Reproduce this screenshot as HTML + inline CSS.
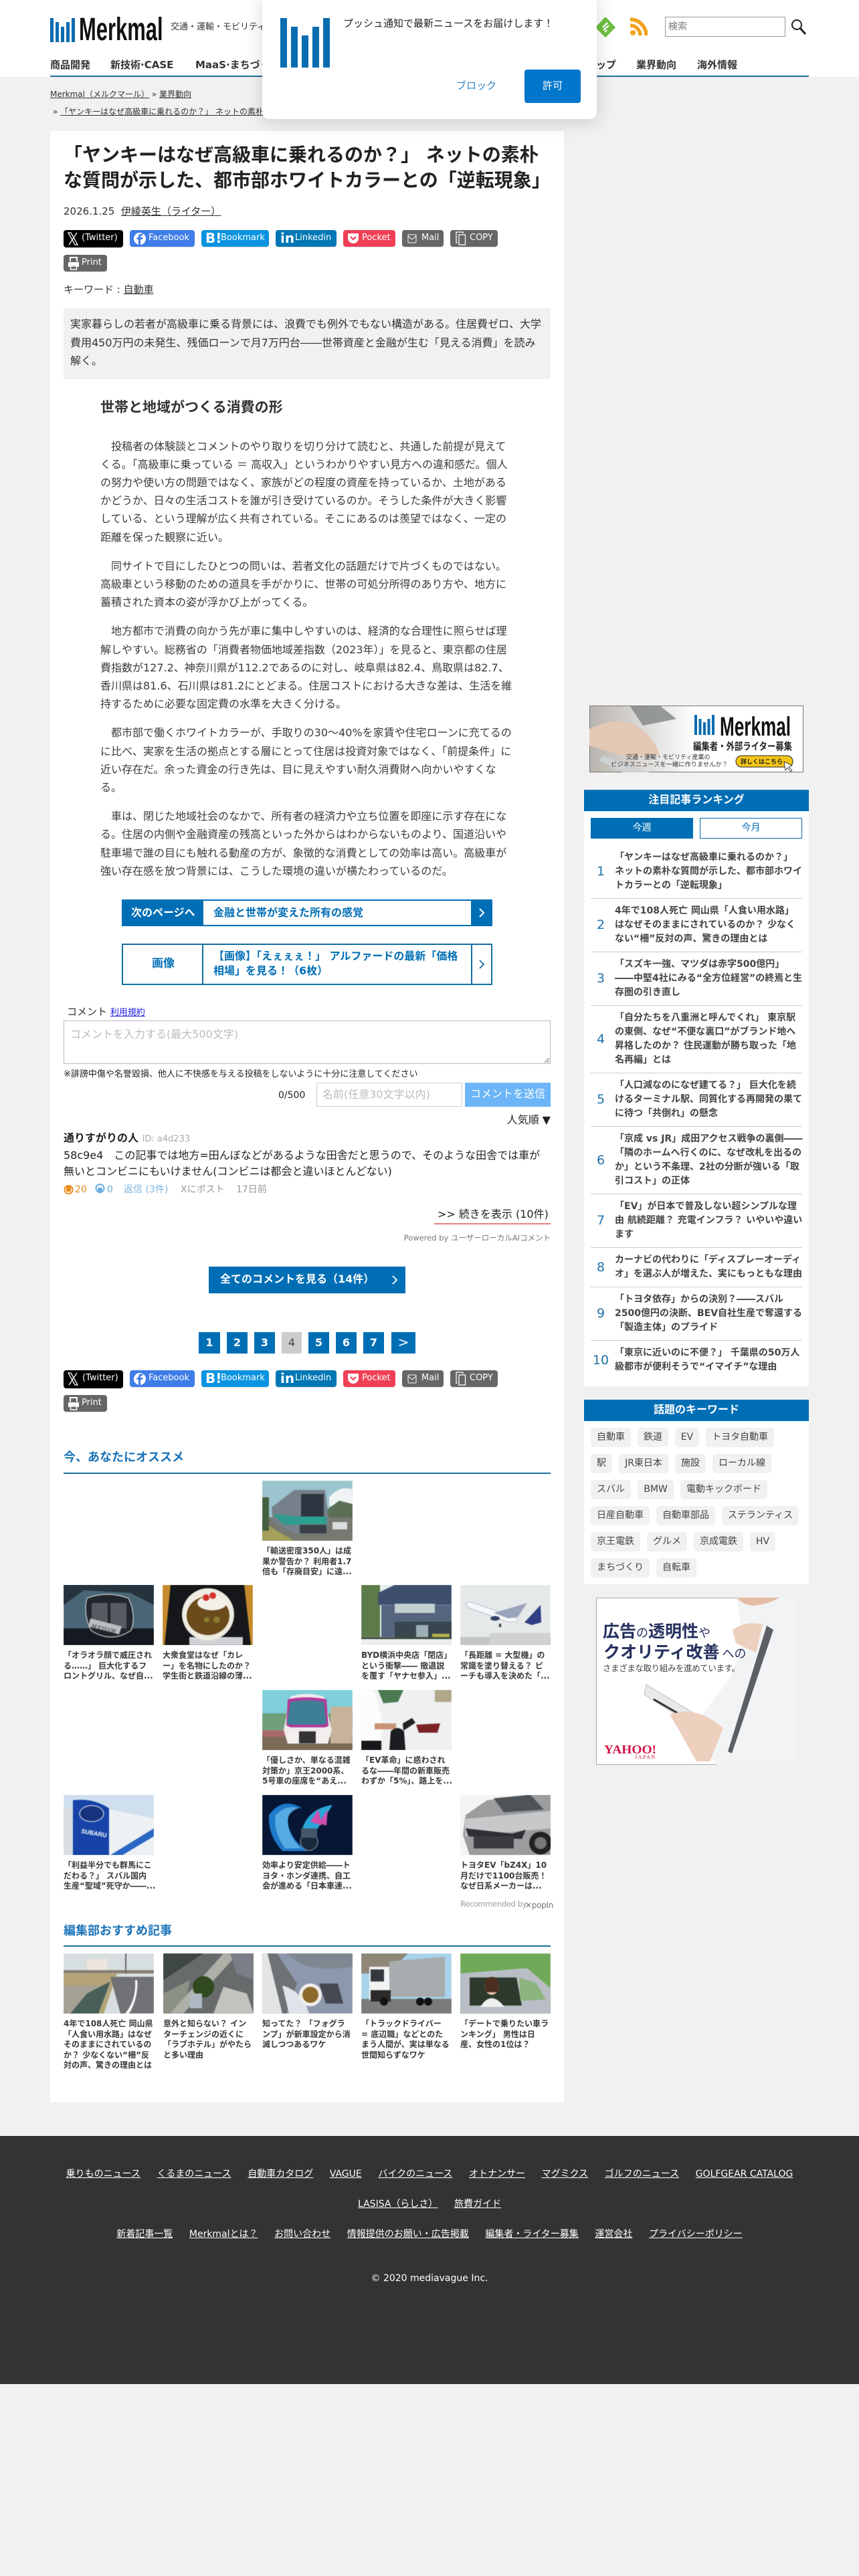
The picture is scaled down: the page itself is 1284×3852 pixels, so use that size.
<!DOCTYPE html>
<html lang="ja"><head><meta charset="utf-8"><title>Merkmal</title>
<style>
*{box-sizing:border-box;margin:0;padding:0}
html,body{width:1284px;height:3852px;overflow:hidden;background:#f1f1f1}
body{position:relative;font-family:"DejaVu Sans","Noto Sans CJK JP",sans-serif;color:#333;font-size:16px}
.a{position:absolute;white-space:nowrap}
a,u{color:inherit}
.bar{position:absolute;background:#0a6cb0}
.btn{position:absolute;height:25px;border-radius:4px;color:#fff;font-size:13px;line-height:24px;white-space:nowrap;box-shadow:0 1px 1px rgba(0,0,0,.12)}
.btn svg{position:absolute;left:5px;top:3px}
.btn span{position:absolute;top:0}
.thumb{position:absolute;width:135px;height:90px;overflow:hidden;display:block}
.thumb>*{filter:blur(.4px)}
.ct{position:absolute;width:135px;font-size:12px;line-height:15.7px;font-weight:700;color:#3a3a3a;white-space:nowrap}
.pg{position:absolute;top:1992px;height:32px;background:#006eb5;color:#fff;font-weight:700;font-size:16px;line-height:31px;text-align:center}
.ri{position:absolute;left:883px;width:316px;display:flex;align-items:center}
.ri b{width:30px;text-align:center;font-weight:400;font-size:19px;color:#2272a8;flex:none}
.ri div{margin-left:6px;font-size:14px;line-height:21px;white-space:nowrap;font-weight:700;color:#444}
.sep{position:absolute;left:883px;width:316px;height:1px;background:#ccc}
.chip{position:absolute;height:29px;background:#f1f1f1;border-radius:5px;font-size:14px;line-height:28px;text-align:center;color:#444;white-space:nowrap}
p{margin:0 0 16px}
#foot{position:absolute;left:0;top:3194px;width:1284px;height:371px;background:#333;color:#fff;font-size:14px}
#foot div{position:absolute;left:0;width:1284px;text-align:center;white-space:nowrap;line-height:20px}
#foot u{margin:0 12.3px}
</style></head><body>

<!-- header -->
<div class="a" style="left:0;top:0;width:1284px;height:115px;background:#fff"></div>
<div class="a" style="left:75px;top:113px;width:1134px;height:2px;background:#1a6f9c"></div>
<div class="bar" style="left:75px;top:27px;width:5px;height:36px"></div>
<div class="bar" style="left:83px;top:33px;width:5px;height:30px"></div>
<div class="bar" style="left:91px;top:40px;width:5px;height:23px"></div>
<div class="bar" style="left:99px;top:33px;width:5px;height:30px"></div>
<div class="bar" style="left:107px;top:27px;width:5px;height:36px"></div>
<div class="a" style="left:118px;top:17px;font:700 48px/56px 'Liberation Sans',sans-serif;color:#111;transform:scaleX(.645);transform-origin:0 0">Merkmal</div>
<div class="a" style="left:255px;top:31px;font-size:13px;line-height:20px">交通・運輸・モビリティ産業の最新ビジネスニュース</div>
<svg class="a" style="left:890px;top:26px" width="30" height="30" viewBox="0 0 30 30"><path d="M15 1 28 15 15 28 2 15Z" fill="#6cbf3f" stroke="#6cbf3f" stroke-width="3" stroke-linejoin="round"/><path d="M11 15 18 8M12 19 20 12M14 22l3-3" stroke="#fff" stroke-width="2.4"/></svg>
<svg class="a" style="left:940px;top:26px" width="28" height="28" viewBox="0 0 28 28"><circle cx="6" cy="23" r="4" fill="#f0a21f"/><path d="M2 12A15 15 0 0 1 17 27M2 3A24 24 0 0 1 26 27" fill="none" stroke="#f0a21f" stroke-width="5.5"/></svg>
<div class="a" style="left:994px;top:25px;width:180px;height:30px;border:1px solid #999;background:#fff;font-size:14px;line-height:28px;padding-left:4px;color:#777">検索</div>
<svg class="a" style="left:1182px;top:28px" width="24" height="24" viewBox="0 0 24 24"><circle cx="9" cy="9" r="7" fill="none" stroke="#222" stroke-width="2"/><path d="M14 14 22 23" stroke="#222" stroke-width="3"/></svg>
<div class="a" style="left:75px;top:87px;font-size:15px;line-height:20px;font-weight:700">商品開発</div>
<div class="a" style="left:165px;top:87px;font-size:15px;line-height:20px;font-weight:700">新技術·CASE</div>
<div class="a" style="left:292px;top:87px;font-size:15px;line-height:20px;font-weight:700">MaaS·まちづくり</div>
<div class="a" style="left:816px;top:87px;font-size:15px;line-height:20px;font-weight:700">スタートアップ</div>
<div class="a" style="left:951px;top:87px;font-size:15px;line-height:20px;font-weight:700">業界動向</div>
<div class="a" style="left:1042px;top:87px;font-size:15px;line-height:20px;font-weight:700">海外情報</div>
<div class="a" style="left:75px;top:133px;font-size:12px;line-height:17px"><u>Merkmal（メルクマール）</u> » <u>業界動向</u></div>
<div class="a" style="left:79px;top:159px;font-size:12px;line-height:17px">» <u>「ヤンキーはなぜ高級車に乗れるのか？」 ネットの素朴な質問が示した</u></div>

<!-- article card -->
<div class="a" style="left:75px;top:196px;width:768px;height:2948px;background:#fff"></div>
<div class="a" style="left:95px;top:213px;font-size:28px;line-height:38px;font-weight:700;color:#222">「ヤンキーはなぜ高級車に乗れるのか？」 ネットの素朴<br>な質問が示した、都市部ホワイトカラーとの「逆転現象」</div>
<div class="a" style="left:95px;top:305px;font-size:15px;line-height:22px">2026.1.25 &nbsp;<u>伊綾英生（ライター）</u></div>

<!-- share 1 -->
<div class="btn" style="left:95px;top:344px;width:89px;height:26px;background:#000"><svg width="18" height="20" viewBox="0 0 18 20"><path d="M2 1h4l10 18h-4ZM15 1 3 19" fill="none" stroke="#fff" stroke-width="1.3"/></svg><span style="left:27px">(Twitter)</span></div>
<div class="btn" style="left:194px;top:344px;width:97px;background:#3f7de8"><svg width="20" height="20" viewBox="0 0 20 20"><circle cx="10" cy="10" r="9" fill="#fff"/><path d="M11 19v-8h3l.4-3H11V6.500c0-1 .5-1.500 1.500-1.500H14.500V2.500h-2.500C9.500 2.500 8 4 8 6.500V8H5.500v3H8v8Z" fill="#3f7de8"/></svg><span style="left:28px">Facebook</span></div>
<div class="btn" style="left:301px;top:344px;width:101px;background:#0a93e0"><span style="left:6px;font-size:20px;font-weight:700">B!</span><span style="left:29px">Bookmark</span></div>
<div class="btn" style="left:412px;top:344px;width:91px;background:#0077b5"><span style="left:7px;font-size:20px;font-weight:700">in</span><span style="left:29px">Linkedin</span></div>
<div class="btn" style="left:513px;top:344px;width:78px;background:#ef4056"><svg style="left:6px" width="18" height="18" viewBox="0 0 18 18"><path d="M1 2h16v7a8 8 0 0 1-16 0Z" fill="#fff"/><path d="M5 7l4 4 4-4" fill="none" stroke="#ef4056" stroke-width="2.200"/></svg><span style="left:28px">Pocket</span></div>
<div class="btn" style="left:601px;top:344px;width:62px;background:#666"><svg style="left:8px;top:6px" width="14" height="14" viewBox="0 0 14 14"><rect x="1" y="1" width="12" height="12" rx="1" fill="none" stroke="#fff"/><path d="M1 3l6 5 6-5" fill="none" stroke="#fff"/></svg><span style="left:29px">Mail</span></div>
<div class="btn" style="left:673px;top:344px;width:71px;background:#666"><svg style="left:8px;top:2px" width="16" height="21" viewBox="0 0 16 21"><path d="M3 17H1V1h10v2" fill="none" stroke="#fff" stroke-width="1.300"/><rect x="5" y="5" width="9.500" height="15" fill="none" stroke="#fff" stroke-width="1.300"/></svg><span style="left:29px">COPY</span></div>
<div class="btn" style="left:95px;top:381px;width:65px;background:#666"><svg style="left:6px;top:3px" width="18" height="20" viewBox="0 0 18 20"><path d="M4 7V1h10v6" fill="none" stroke="#fff" stroke-width="2"/><path d="M1 8h16v7H14v-2H4v2H1Z" fill="#fff"/><rect x="4.500" y="14" width="9" height="5" fill="none" stroke="#fff" stroke-width="1.500"/></svg><span style="left:27px">Print</span></div>

<div class="a" style="left:95px;top:422px;font-size:15px;line-height:22px">キーワード : <u>自動車</u></div>
<div class="a" style="left:95px;top:461px;width:728px;height:106px;background:#f1f1f1"></div>
<div class="a" style="left:105px;top:471px;line-height:27.500px">実家暮らしの若者が高級車に乗る背景には、浪費でも例外でもない構造がある。住居費ゼロ、大学<br>費用450万円の未発生、残価ローンで月7万円台――世帯資産と金融が生む「見える消費」を読み<br>解く。</div>

<div class="a" style="left:150px;top:596px;font-size:21px;line-height:27px;font-weight:700;color:#333">世帯と地域がつくる消費の形</div>
<div class="a" style="left:150px;top:653.500px;line-height:27.200px;color:#3a3a3a">
<p>　投稿者の体験談とコメントのやり取りを切り分けて読むと、共通した前提が見えて<br>くる。「高級車に乗っている ＝ 高収入」というわかりやすい見方への違和感だ。個人<br>の努力や使い方の問題ではなく、家族がどの程度の資産を持っているか、土地がある<br>かどうか、日々の生活コストを誰が引き受けているのか。そうした条件が大きく影響<br>している、という理解が広く共有されている。そこにあるのは羨望ではなく、一定の<br>距離を保った観察に近い。</p>
<p>　同サイトで目にしたひとつの問いは、若者文化の話題だけで片づくものではない。<br>高級車という移動のための道具を手がかりに、世帯の可処分所得のあり方や、地方に<br>蓄積された資本の姿が浮かび上がってくる。</p>
<p>　地方都市で消費の向かう先が車に集中しやすいのは、経済的な合理性に照らせば理<br>解しやすい。総務省の「消費者物価地域差指数（2023年）」を見ると、東京都の住居<br>費指数が127.2、神奈川県が112.2であるのに対し、岐阜県は82.4、鳥取県は82.7、<br>香川県は81.6、石川県は81.2にとどまる。住居コストにおける大きな差は、生活を維<br>持するために必要な固定費の水準を大きく分ける。</p>
<p>　都市部で働くホワイトカラーが、手取りの30～40%を家賃や住宅ローンに充てるの<br>に比べ、実家を生活の拠点とする層にとって住居は投資対象ではなく、「前提条件」に<br>近い存在だ。余った資金の行き先は、目に見えやすい耐久消費財へ向かいやすくな<br>る。</p>
<p>　車は、閉じた地域社会のなかで、所有者の経済力や立ち位置を即座に示す存在にな<br>る。住居の内側や金融資産の残高といった外からはわからないものより、国道沿いや<br>駐車場で誰の目にも触れる動産の方が、象徴的な消費としての効率は高い。高級車が<br>強い存在感を放つ背景には、こうした環境の違いが横たわっているのだ。</p>
</div>

<!-- next page -->
<div class="a" style="left:182px;top:1345px;width:554px;height:40px;background:#006eb5"></div>
<div class="a" style="left:304px;top:1347px;width:400px;height:36px;background:#fff;color:#006eb5;font-weight:700;font-size:16px;line-height:35px;padding-left:15px">金融と世帯が変えた所有の感覚</div>
<div class="a" style="left:196px;top:1347px;color:#fff;font-weight:700;font-size:16px;line-height:35px">次のページへ</div>
<svg class="a" style="left:714px;top:1357px" width="12" height="16" viewBox="0 0 12 16"><path d="M3 2l6 6-6 6" fill="none" stroke="#fff" stroke-width="2"/></svg>
<div class="a" style="left:182px;top:1411px;width:554px;height:62px;border:2px solid #126f9f;background:#fff"></div>
<div class="a" style="left:302px;top:1411px;width:2px;height:62px;background:#126f9f"></div>
<div class="a" style="left:704px;top:1411px;width:2px;height:62px;background:#126f9f"></div>
<div class="a" style="left:227px;top:1429px;color:#006eb5;font-weight:700;font-size:17px;line-height:25px">画像</div>
<div class="a" style="left:319px;top:1419px;color:#006eb5;font-weight:700;font-size:16px;line-height:22px">【画像】「えぇぇぇ！」 アルファードの最新「価格<br>相場」を見る！（6枚）</div>
<svg class="a" style="left:714px;top:1434px" width="12" height="16" viewBox="0 0 12 16"><path d="M3 2l6 6-6 6" fill="none" stroke="#126f9f" stroke-width="1.800"/></svg>

<!-- comments -->
<div class="a" style="left:100px;top:1503px;font-size:15px;line-height:20px">コメント <u style="color:#1a1ae0;font-size:13px">利用規約</u></div>
<div class="a" style="left:95px;top:1526px;width:728px;height:65px;border:1px solid #bbb;background:#fff;padding:8px 9px;line-height:24px;color:#bbb">コメントを入力する(最大500文字)</div>
<svg class="a" style="left:813px;top:1581px" width="9" height="9" viewBox="0 0 9 9"><path d="M1 8 8 1M5 8 8 5" stroke="#777"/></svg>
<div class="a" style="left:95px;top:1598px;font-size:13px;line-height:18px;color:#222">※誹謗中傷や名誉毀損、他人に不快感を与える投稿をしないように十分に注意してください</div>
<div class="a" style="left:416px;top:1628px;font-size:14px;line-height:20px;color:#222">0/500</div>
<div class="a" style="left:473px;top:1619px;width:218px;height:36px;border:1px solid #ccc;background:#fff;padding-left:8px;line-height:33px;color:#bbb">名前(任意30文字以内)</div>
<div class="a" style="left:695px;top:1619px;width:128px;height:36px;background:#6cb5f6;color:#fff;text-align:center;line-height:34px">コメントを送信</div>
<div class="a" style="right:461px;top:1664px;line-height:22px;color:#222">人気順 ▼</div>
<div class="a" style="left:95px;top:1690px;line-height:24px;font-weight:700;color:#222">通りすがりの人 <span style="font-weight:400;font-size:13px;color:#aaa">ID: a4d233</span></div>
<div class="a" style="left:95px;top:1716px;line-height:24px;color:#222">58c9e4　この記事では地方=田んぼなどがあるような田舎だと思うので、そのような田舎では車が<br>無いとコンビニにもいけません(コンビニは都会と違いほとんどない)</div>
<svg class="a" style="left:95px;top:1771px" width="15" height="16" viewBox="0 0 15 16"><circle cx="7.500" cy="8" r="6" fill="none" stroke="#e88b1c" stroke-width="2"/><rect x="4" y="3" width="7" height="8" rx="2" fill="#e88b1c"/></svg>
<div class="a" style="left:112px;top:1769px;font-size:14px;line-height:20px;color:#e88b1c">20</div>
<svg class="a" style="left:142px;top:1770px" width="15" height="16" viewBox="0 0 15 16"><circle cx="7.500" cy="7" r="6" fill="none" stroke="#6aaee0" stroke-width="2"/><rect x="4" y="6" width="7" height="8" rx="2" fill="#6aaee0"/></svg>
<div class="a" style="left:160px;top:1769px;font-size:14px;line-height:20px;color:#6aaee0">0</div>
<div class="a" style="left:185px;top:1769px;font-size:14px;line-height:20px;color:#7db4e0">返信 (3件)</div>
<div class="a" style="left:270px;top:1769px;font-size:14px;line-height:20px;color:#999">Xにポスト</div>
<div class="a" style="left:353px;top:1769px;font-size:14px;line-height:20px;color:#999">17日前</div>
<div class="a" style="left:654px;top:1805px;line-height:22px;color:#222">&gt;&gt; 続きを表示 (10件)</div>
<div class="a" style="left:649px;top:1829px;width:174px;height:2px;background:#e88080"></div>
<div class="a" style="right:461px;top:1843px;font-size:11.500px;line-height:16px;color:#777">Powered by ユーザーローカルAIコメント</div>
<div class="a" style="left:312px;top:1894px;width:294px;height:40px;background:#006eb5"></div>
<div class="a" style="left:329px;top:1901px;color:#fff;font-weight:700;font-size:16px;line-height:24px">全てのコメントを見る（14件）</div>
<svg class="a" style="left:584px;top:1906px" width="12" height="16" viewBox="0 0 12 16"><path d="M3 2l6 6-6 6" fill="none" stroke="#fff" stroke-width="1.800"/></svg>

<!-- pagination -->
<div class="pg" style="left:297px;width:32px">1</div>
<div class="pg" style="left:339px;width:31px">2</div>
<div class="pg" style="left:380px;width:31px">3</div>
<div class="pg" style="left:421px;width:30px;background:#ccc;color:#444;font-weight:400">4</div>
<div class="pg" style="left:461px;width:31px">5</div>
<div class="pg" style="left:502px;width:31px">6</div>
<div class="pg" style="left:543px;width:31px">7</div>
<div class="pg" style="left:585px;width:36px;font-weight:400;font-size:20px">&gt;</div>

<!-- share 2 -->
<div class="btn" style="left:95px;top:2049px;width:89px;height:27px;background:#000"><svg width="18" height="20" viewBox="0 0 18 20"><path d="M2 1h4l10 18h-4ZM15 1 3 19" fill="none" stroke="#fff" stroke-width="1.3"/></svg><span style="left:28px">(Twitter)</span></div>
<div class="btn" style="left:194px;top:2049px;width:97px;background:#3f7de8"><svg width="20" height="20" viewBox="0 0 20 20"><circle cx="10" cy="10" r="9" fill="#fff"/><path d="M11 19v-8h3l.4-3H11V6.500c0-1 .5-1.500 1.500-1.500H14.500V2.500h-2.500C9.500 2.500 8 4 8 6.500V8H5.500v3H8v8Z" fill="#3f7de8"/></svg><span style="left:28px">Facebook</span></div>
<div class="btn" style="left:301px;top:2049px;width:101px;background:#0a93e0"><span style="left:6px;font-size:20px;font-weight:700">B!</span><span style="left:29px">Bookmark</span></div>
<div class="btn" style="left:412px;top:2049px;width:91px;background:#0077b5"><span style="left:7px;font-size:20px;font-weight:700">in</span><span style="left:29px">Linkedin</span></div>
<div class="btn" style="left:513px;top:2049px;width:78px;background:#ef4056"><svg style="left:6px" width="18" height="18" viewBox="0 0 18 18"><path d="M1 2h16v7a8 8 0 0 1-16 0Z" fill="#fff"/><path d="M5 7l4 4 4-4" fill="none" stroke="#ef4056" stroke-width="2.200"/></svg><span style="left:28px">Pocket</span></div>
<div class="btn" style="left:601px;top:2049px;width:62px;background:#666"><svg style="left:8px;top:6px" width="14" height="14" viewBox="0 0 14 14"><rect x="1" y="1" width="12" height="12" rx="1" fill="none" stroke="#fff"/><path d="M1 3l6 5 6-5" fill="none" stroke="#fff"/></svg><span style="left:29px">Mail</span></div>
<div class="btn" style="left:673px;top:2049px;width:71px;background:#666"><svg style="left:8px;top:2px" width="16" height="21" viewBox="0 0 16 21"><path d="M3 17H1V1h10v2" fill="none" stroke="#fff" stroke-width="1.300"/><rect x="5" y="5" width="9.500" height="15" fill="none" stroke="#fff" stroke-width="1.300"/></svg><span style="left:29px">COPY</span></div>
<div class="btn" style="left:95px;top:2086px;width:65px;background:#666"><svg style="left:6px;top:3px" width="18" height="20" viewBox="0 0 18 20"><path d="M4 7V1h10v6" fill="none" stroke="#fff" stroke-width="2"/><path d="M1 8h16v7H14v-2H4v2H1Z" fill="#fff"/><rect x="4.500" y="14" width="9" height="5" fill="none" stroke="#fff" stroke-width="1.500"/></svg><span style="left:27px">Print</span></div>

<!-- recommended -->
<div class="a" style="left:95px;top:2167px;font-size:18px;line-height:26px;font-weight:700;color:#1a73b8">今、あなたにオススメ</div>
<div class="a" style="left:95px;top:2202px;width:728px;height:2px;background:#1a6f9c"></div>

<svg class="thumb" style="left:392px;top:2214px" viewBox="0 0 135 90"><rect width="135" height="90" fill="#9cc4cf"/><path d="M100 25q15-18 35-12v25H100Z" fill="#f0f3f3"/><path d="M95 45l20-15 20 5v25H95Z" fill="#5a6f55"/><rect y="55" width="135" height="35" fill="#77786f"/><path d="M0 90V60l20 14 28 16Z" fill="#a4a05a"/><rect x="0" y="25" width="10" height="50" fill="#456040"/><rect x="105" y="62" width="22" height="11" fill="#d9dcdd"/><path d="M14 40 48 14h46l6 50-6 16H50L16 62Z" fill="#76808a"/><rect x="58" y="20" width="34" height="34" fill="#2d3640"/><path d="M16 50 56 54v12H32Z" fill="#2f9c8f"/><rect x="56" y="54" width="40" height="11" fill="#2aa090"/><rect x="56" y="66" width="40" height="13" fill="#3a4048"/></svg>
<div class="ct" style="left:392px;top:2312px">「輸送密度350人」は成<br>果か警告か？ 利用者1.7<br>倍も「存廃目安」に遠...</div>

<svg class="thumb" style="left:95px;top:2370px" viewBox="0 0 135 90"><rect width="135" height="90" fill="#4a6676"/><path d="M0 0h135v30L100 12 30 8 0 30Z" fill="#26333c"/><rect y="65" width="135" height="25" fill="#141a1f"/><path d="M35 20q30-12 62 0 12 25 4 48-30 20-60 0-12-25-6-48Z" fill="#20262b" stroke="#cfd6d8" stroke-width="1.200"/><path d="M42 27h24v38H42ZM70 27h24v38H70Z" fill="#555b60"/><path d="M40 50 87 62 83 74 37 62Z" fill="#b8bfc2"/><text x="42" y="64" font-family="Liberation Sans" font-size="8" transform="rotate(14 42 64)" fill="#222">M E1510E</text></svg>
<div class="ct" style="left:95px;top:2468px">「オラオラ顔で威圧され<br>る……」 巨大化するフ<br>ロントグリル、なぜ自...</div>

<svg class="thumb" style="left:243px;top:2370px" viewBox="0 0 135 90"><rect width="135" height="90" fill="#c58a2c"/><path d="M12 0h110l10 90H3Z" fill="#15171a"/><rect x="40" y="78" width="80" height="12" fill="#cfd3d6"/><circle cx="68" cy="44" r="39" fill="#efebe2"/><ellipse cx="68" cy="46" rx="32" ry="29" fill="#6b4a1c"/><ellipse cx="74" cy="27" rx="22" ry="11" fill="#f3f0e8"/><circle cx="65" cy="19" r="5" fill="#d6322c"/><circle cx="75" cy="16" r="5" fill="#d6322c"/><circle cx="81" cy="52" r="5" fill="#8a7a30"/><circle cx="66" cy="52" r="4" fill="#8a7a30"/></svg>
<div class="ct" style="left:243px;top:2468px">大衆食堂はなぜ「カレ<br>ー」を名物にしたのか？<br>学生街と鉄道沿線の薄...</div>

<svg class="thumb" style="left:540px;top:2370px" viewBox="0 0 135 90"><rect width="135" height="90" fill="#e8ecef"/><path d="M0 0h28v78H0Z" fill="#5d7a4a"/><path d="M25 12 50 0h85v30H25Z" fill="#3d4f6c"/><path d="M30 30h105v48H30Z" fill="#55657f"/><rect x="50" y="28" width="60" height="14" fill="#c3d0d0"/><rect x="50" y="55" width="85" height="24" fill="#39454f"/><rect x="82" y="60" width="18" height="20" fill="#9db0b8"/><rect y="78" width="135" height="3" fill="#3a4a3a"/><rect x="106" y="73" width="26" height="5" fill="#b5b04a"/><rect y="82" width="135" height="8" fill="#eceeee"/></svg>
<div class="ct" style="left:540px;top:2468px">BYD横浜中央店「閉店」<br>という衝撃―― 撤退説<br>を覆す「ヤナセ参入」...</div>

<svg class="thumb" style="left:688px;top:2370px" viewBox="0 0 135 90"><rect width="135" height="90" fill="#e6e9ea"/><rect y="78" width="135" height="12" fill="#c4c6c6"/><rect x="44" y="72" width="91" height="18" fill="#cfd1d2"/><path d="M8 28q4-4 12-1l62 22q8 4 0 6H70L20 37Q10 34 8 28Z" fill="#f6f8f9" stroke="#8a93a8" stroke-width=".6"/><path d="M50 42 100 27 86 48 72 50Z" fill="#9aa3bc"/><path d="M96 56 120 30l1 26-14 4Z" fill="#2f3f85"/><ellipse cx="52" cy="50" rx="7" ry="3.500" fill="#34406a"/><rect x="58" y="58" width="3" height="5" fill="#333"/></svg>
<div class="ct" style="left:688px;top:2468px">「長距離 = 大型機」の<br>常識を塗り替える？ ピ<br>ーチも導入を決めた「...</div>

<svg class="thumb" style="left:392px;top:2527px" viewBox="0 0 135 90"><rect width="135" height="90" fill="#7fd0da"/><rect y="35" width="135" height="25" fill="#6fa07a"/><rect y="60" width="40" height="12" fill="#a9696c"/><rect y="70" width="135" height="20" fill="#7b6a58"/><rect x="102" y="25" width="33" height="55" fill="#c9b29a"/><path d="M42 10q25-8 50 0l12 50-6 20H38l-6-20Z" fill="#f1ecec"/><path d="M38 14q28-6 58 0l3 40-5 2H42l-6-3Z" fill="#b43a9a"/><path d="M42 18q25-5 50 0l4 32-6 2H42l-5-2Z" fill="#3f7f96"/><path d="M38 60q28 8 60 0v20H38Z" fill="#f4efef"/><rect x="55" y="62" width="25" height="18" fill="#333"/></svg>
<div class="ct" style="left:392px;top:2625px">「優しさか、単なる混雑<br>対策か」京王2000系、<br>5号車の座席を“あえ...</div>

<svg class="thumb" style="left:540px;top:2527px" viewBox="0 0 135 90"><rect width="135" height="90" fill="#e6e9ea"/><path d="M22 0h113v90H22Z" fill="#eef0f1"/><path d="M25 0h38l-8 18-22 2Z" fill="#4b7a52"/><path d="M110 0h25v18h-25Z" fill="#b3a78a"/><path d="M0 0h20l12 46-2 30H0Z" fill="#fbfcfc"/><rect x="20" y="50" width="32" height="9" fill="#c89476"/><rect y="76" width="30" height="14" fill="#15171a"/><path d="M44 62q10-10 20 0l2 28H42Z" fill="#1c1d20"/><path d="M62 50 76 42l5 7-18 12Z" fill="#222"/><path d="M82 52l36-2-4 14H86Z" fill="#7a2426"/></svg>
<div class="ct" style="left:540px;top:2625px">「EV革命」に惑わされ<br>るな――年間の新車販売<br>わずか「5%」、路上を...</div>

<svg class="thumb" style="left:95px;top:2684px" viewBox="0 0 135 90"><rect width="135" height="90" fill="#cfdfee"/><path d="M60 20 135 35v55H60Z" fill="#eef1f3"/><path d="M135 50v12L88 90H70Z" fill="#2a66c4"/><rect y="20" width="14" height="70" fill="#d8dee2"/><path d="M14 8q30-4 54 12v70H14Z" fill="#1743a8"/><ellipse cx="42" cy="28" rx="18" ry="12" fill="#16347e" stroke="#fff"/><text x="26" y="57" font-family="Liberation Sans" font-weight="700" font-size="9" fill="#fff" transform="rotate(10 26 57)">SUBARU</text></svg>
<div class="ct" style="left:95px;top:2782px">「利益半分でも群馬にこ<br>だわる？」 スバル国内<br>生産“聖域”死守か――...</div>

<svg class="thumb" style="left:392px;top:2684px" viewBox="0 0 135 90"><rect width="135" height="90" fill="#061634"/><path d="M10 30q20-28 50-10-18-2-22 14 0 30 30 50H30Q8 60 10 30Z" fill="#1f78c8"/><path d="M20 30q16-16 34-10-16 6-16 20 0 20 20 40H34Q16 55 20 30Z" fill="#6ec2ee" opacity=".7"/><path d="M60 50q10-30 45-35l-25 40Z" fill="#2aa6d8"/><path d="M72 40l12-18 5 24ZM84 42l14-20-2 24Z" fill="#d04fae"/><circle cx="70" cy="70" r="13" fill="#1a2a3c" stroke="#9aa8b8"/><rect x="58" y="50" width="24" height="14" fill="#44566a"/></svg>
<div class="ct" style="left:392px;top:2782px">効率より安定供給――ト<br>ヨタ・ホンダ連携、自工<br>会が進める「日本車連...</div>

<svg class="thumb" style="left:688px;top:2684px" viewBox="0 0 135 90"><rect width="135" height="90" fill="#f4f4f4"/><path d="M8 30 40 8 100 0h35v90H14L4 60Z" fill="#9a9c9e"/><path d="M50 5 105 0l20 22-60 4Z" fill="#4e5358"/><path d="M6 36 135 24v26L8 62Z" fill="#c6c8ca"/><path d="M8 50l70 8 20-6-6 14-80-4Z" fill="#2e3034"/><rect x="20" y="62" width="60" height="18" fill="#3a3c40"/><circle cx="120" cy="72" r="17" fill="#222"/><circle cx="120" cy="72" r="9" fill="#777"/></svg>
<div class="ct" style="left:688px;top:2782px">トヨタEV「bZ4X」10<br>月だけで1100台販売！<br>なぜ日系メーカーは...</div>

<div class="a" style="left:688px;top:2839px;font-size:11.500px;line-height:16px;color:#999;letter-spacing:-.35px">Recommended by</div>
<div class="a" style="left:785px;top:2841px;font-size:12px;line-height:16px;color:#777;letter-spacing:-.3px">✕popIn</div>

<!-- editors -->
<div class="a" style="left:95px;top:2875px;font-size:18px;line-height:26px;font-weight:700;color:#1a73b8">編集部おすすめ記事</div>
<div class="a" style="left:95px;top:2909px;width:728px;height:2px;background:#1a6f9c"></div>

<svg class="thumb" style="left:95px;top:2921px" viewBox="0 0 135 90"><rect width="135" height="90" fill="#d7dee0"/><rect x="35" y="8" width="30" height="20" fill="#ece6dc"/><rect y="25" width="135" height="5" fill="#877f70"/><path d="M0 30h80L60 90H0Z" fill="#b3a376"/><path d="M0 48h70l-18 42H0Z" fill="#a5a195"/><path d="M35 60l35-18-18 48H10Z" fill="#49605a"/><path d="M70 35h65v55H85Z" fill="#707275"/><path d="M107 40q2 30-15 50h6q14-24 12-50Z" fill="#fff"/><rect x="92" y="0" width="2" height="30" fill="#666"/></svg>
<svg class="thumb" style="left:244px;top:2921px" viewBox="0 0 135 90"><rect width="135" height="90" fill="#676b6c"/><path d="M0 0h60L0 40Z" fill="#3f4646"/><path d="M0 60 40 40 30 90H0Z" fill="#8c9186"/><path d="M10 90 90 0h22L30 90Z" fill="#aeb0a8"/><circle cx="60" cy="50" r="16" fill="#31491f"/><rect x="40" y="60" width="18" height="22" fill="#aeb8c2"/><path d="M75 90 90 50l35 10 10 30Z" fill="#c3c3bd"/><path d="M100 0h35v40l-25-10Z" fill="#7b7e86"/></svg>
<svg class="thumb" style="left:392px;top:2921px" viewBox="0 0 135 90"><rect width="135" height="90" fill="#8d98ad"/><path d="M0 0h8l28 90H0Z" fill="#e3e5e4"/><path d="M8 0h14l30 45-16 45H30Z" fill="#6f7275"/><path d="M36 0h99v20q-50 8-80-6Z" fill="#7f8790"/><path d="M30 48q30 8 40 42H40Z" fill="#dfe3ea"/><circle cx="72" cy="62" r="17" fill="#f1efe9"/><circle cx="72" cy="62" r="12" fill="#8b6a2c"/><path d="M85 45h28l8 30H95Z" fill="#454a52"/></svg>
<svg class="thumb" style="left:540px;top:2921px" viewBox="0 0 135 90"><rect width="135" height="90" fill="#a9d3ea"/><path d="M0 0h70l-30 30H0Z" fill="#8f8878"/><rect y="68" width="135" height="22" fill="#7a7c7a"/><path d="M42 12 125 5v60H42Z" fill="#a8acaf"/><path d="M12 20h30v50H12Z" fill="#f2f3f3"/><rect x="14" y="24" width="20" height="18" fill="#33393e"/><rect x="14" y="55" width="30" height="17" fill="#2b2b2b"/><circle cx="34" cy="72" r="6" fill="#111"/><circle cx="100" cy="72" r="6" fill="#111"/><circle cx="88" cy="72" r="6" fill="#111"/></svg>
<svg class="thumb" style="left:688px;top:2921px" viewBox="0 0 135 90"><rect width="135" height="90" fill="#6faa58"/><path d="M0 30 100 22l35 30v38H0Z" fill="#b9bec6"/><path d="M14 36h70l8 42H14Z" fill="#2e3a2e"/><path d="M88 36l25 8 15 25-38 2Z" fill="#8bb47e"/><ellipse cx="47" cy="50" rx="10" ry="12" fill="#e5c0a8"/><path d="M37 42q10-14 20 0v16H37Z" fill="#4d2f20"/><path d="M30 80q16-26 36 0Z" fill="#f0f0f0"/></svg>
<div class="ct" style="left:95px;top:3019px;line-height:15.600px">4年で108人死亡 岡山県<br>「人食い用水路」はなぜ<br>そのままにされているの<br>か？ 少なくない“柵”反<br>対の声、驚きの理由とは</div>
<div class="ct" style="left:244px;top:3019px;line-height:15.600px">意外と知らない？ イン<br>ターチェンジの近くに<br>「ラブホテル」がやたら<br>と多い理由</div>
<div class="ct" style="left:392px;top:3019px;line-height:15.600px">知ってた？ 「フォグラ<br>ンプ」が新車設定から消<br>滅しつつあるワケ</div>
<div class="ct" style="left:540px;top:3019px;line-height:15.600px">「トラックドライバー<br>= 底辺職」などとのた<br>まう人間が、実は単なる<br>世間知らずなワケ</div>
<div class="ct" style="left:688px;top:3019px;line-height:15.600px">「デートで乗りたい車ラ<br>ンキング」 男性は日<br>産、女性の1位は？</div>

<!-- sidebar banner -->
<svg class="a" style="left:881px;top:1055px" width="320" height="100" viewBox="0 0 320 100"><defs><linearGradient id="g1" x1="0" x2="1" y1="0" y2="0"><stop offset="0" stop-color="#b9b4ae"/><stop offset=".5" stop-color="#fff"/></linearGradient></defs><rect x=".5" y=".5" width="319" height="99" fill="url(#g1)" stroke="#777"/><path d="M60 0 105 0 130 20 80 30Z" fill="#7a7d80" opacity=".75"/><path d="M0 35q40-20 70-5 30 20 35 45L50 75 0 60Z" fill="#e4c8b6"/><path d="M20 75 90 100H50L15 82Z" fill="#cfd2d4"/><g fill="#0a6cb0"><rect x="157" y="14" width="4" height="30"/><rect x="163.500" y="20" width="4" height="24"/><rect x="170" y="25" width="4" height="19"/><rect x="176.500" y="20" width="4" height="24"/><rect x="183" y="14" width="4" height="30"/></g><text x="195" y="45" font-family="Liberation Sans" font-weight="700" font-size="40" fill="#111" textLength="106" lengthAdjust="spacingAndGlyphs">Merkmal</text><text x="155" y="66" font-size="15" font-weight="700" fill="#222" textLength="148" lengthAdjust="spacingAndGlyphs">編集者・外部ライター募集</text><text x="55" y="80" font-size="9" fill="#333">交通・運輸・モビリティ産業の</text><text x="32" y="91" font-size="9" fill="#333" textLength="175" lengthAdjust="spacingAndGlyphs">ビジネスニュースを一緒に作りませんか？</text><rect x="219" y="75" width="85" height="17" rx="8.500" fill="#f5c518" stroke="#222"/><text x="226" y="87" font-size="9" font-weight="700" fill="#222">詳しくはこちら</text><path d="M291 84l2 13 3-4 5 6 2-2-5-5 5-2Z" fill="#fff" stroke="#222" stroke-width=".8"/></svg>

<!-- ranking -->
<div class="a" style="left:873px;top:1181px;width:336px;height:892px;background:#fff"></div>
<div class="a" style="left:873px;top:1181px;width:336px;height:32px;background:#006eb5;color:#fff;font-weight:700;font-size:16px;line-height:30px;text-align:center">注目記事ランキング</div>
<div class="a" style="left:883px;top:1223px;width:153px;height:31px;background:#006eb5;color:#fff;font-size:14px;line-height:30px;text-align:center">今週</div>
<div class="a" style="left:1046px;top:1223px;width:153px;height:31px;background:#fff;border:1px solid #006eb5;color:#006eb5;font-size:14px;line-height:29px;text-align:center">今月</div>
<div class="ri" style="top:1263px;height:80px"><b>1</b><div>「ヤンキーはなぜ高級車に乗れるのか？」<br>ネットの素朴な質問が示した、都市部ホワイ<br>トカラーとの「逆転現象」</div></div>
<div class="sep" style="top:1343px"></div>
<div class="ri" style="top:1343px;height:80px"><b>2</b><div>4年で108人死亡 岡山県「人食い用水路」<br>はなぜそのままにされているのか？ 少なく<br>ない“柵”反対の声、驚きの理由とは</div></div>
<div class="sep" style="top:1423px"></div>
<div class="ri" style="top:1423px;height:80px"><b>3</b><div>「スズキ一強、マツダは赤字500億円」<br>――中堅4社にみる“全方位経営”の終焉と生<br>存圏の引き直し</div></div>
<div class="sep" style="top:1503px"></div>
<div class="ri" style="top:1503px;height:101px"><b>4</b><div>「自分たちを八重洲と呼んでくれ」 東京駅<br>の東側、なぜ“不便な裏口”がブランド地へ<br>昇格したのか？ 住民運動が勝ち取った「地<br>名再編」とは</div></div>
<div class="sep" style="top:1604px"></div>
<div class="ri" style="top:1604px;height:80px"><b>5</b><div>「人口減なのになぜ建てる？」 巨大化を続<br>けるターミナル駅、同質化する再開発の果て<br>に待つ「共倒れ」の懸念</div></div>
<div class="sep" style="top:1684px"></div>
<div class="ri" style="top:1684px;height:101px"><b>6</b><div>「京成 vs JR」成田アクセス戦争の裏側――<br>「隣のホームへ行くのに、なぜ改札を出るの<br>か」という不条理、2社の分断が強いる「取<br>引コスト」の正体</div></div>
<div class="sep" style="top:1785px"></div>
<div class="ri" style="top:1785px;height:80px"><b>7</b><div>「EV」が日本で普及しない超シンプルな理<br>由 航続距離？ 充電インフラ？ いやいや違い<br>ます</div></div>
<div class="sep" style="top:1865px"></div>
<div class="ri" style="top:1865px;height:59px"><b>8</b><div>カーナビの代わりに「ディスプレーオーディ<br>オ」を選ぶ人が増えた、実にもっともな理由</div></div>
<div class="sep" style="top:1924px"></div>
<div class="ri" style="top:1924px;height:80px"><b>9</b><div>「トヨタ依存」からの決別？――スバル<br>2500億円の決断、BEV自社生産で奪還する<br>「製造主体」のプライド</div></div>
<div class="sep" style="top:2004px"></div>
<div class="ri" style="top:2004px;height:59px"><b>10</b><div>「東京に近いのに不便？」 千葉県の50万人<br>級都市が便利そうで“イマイチ”な理由</div></div>

<!-- keywords -->
<div class="a" style="left:873px;top:2093px;width:336px;height:276px;background:#fff"></div>
<div class="a" style="left:873px;top:2093px;width:336px;height:32px;background:#006eb5;color:#fff;font-weight:700;font-size:16px;line-height:30px;text-align:center">話題のキーワード</div>
<div class="chip" style="left:883px;top:2135px;width:60px">自動車</div>
<div class="chip" style="left:953px;top:2135px;width:46px">鉄道</div>
<div class="chip" style="left:1009px;top:2135px;width:36px">EV</div>
<div class="chip" style="left:1055px;top:2135px;width:102px">トヨタ自動車</div>
<div class="chip" style="left:883px;top:2174px;width:32px">駅</div>
<div class="chip" style="left:925px;top:2174px;width:74px">JR東日本</div>
<div class="chip" style="left:1009px;top:2174px;width:46px">施設</div>
<div class="chip" style="left:1065px;top:2174px;width:88px">ローカル線</div>
<div class="chip" style="left:883px;top:2213px;width:60px">スバル</div>
<div class="chip" style="left:953px;top:2213px;width:54px">BMW</div>
<div class="chip" style="left:1017px;top:2213px;width:130px">電動キックボード</div>
<div class="chip" style="left:883px;top:2252px;width:88px">日産自動車</div>
<div class="chip" style="left:981px;top:2252px;width:88px">自動車部品</div>
<div class="chip" style="left:1079px;top:2252px;width:115px">ステランティス</div>
<div class="chip" style="left:883px;top:2291px;width:74px">京王電鉄</div>
<div class="chip" style="left:967px;top:2291px;width:60px">グルメ</div>
<div class="chip" style="left:1037px;top:2291px;width:74px">京成電鉄</div>
<div class="chip" style="left:1121px;top:2291px;width:38px">HV</div>
<div class="chip" style="left:883px;top:2330px;width:88px">まちづくり</div>
<div class="chip" style="left:981px;top:2330px;width:60px">自転車</div>

<!-- yahoo ad -->
<svg class="a" style="left:891px;top:2389px" width="300" height="250" viewBox="0 0 300 250"><rect x=".5" y=".5" width="299" height="249" fill="#fff" stroke="#aaa"/><path d="M210 0h90v250H180l-40-50 60-80 20-50Z" fill="#f2f3f5"/><path d="M210 0q10 12 28 12 24-4 36-12Z" fill="#e3bda4"/><path d="M204 48q20-14 45-8l-10 42-30-14Z" fill="#edcfbd"/><path d="M255 42l10 6-62 185-6-3Z" fill="#5c5f66"/><path d="M75 130 150 175 135 185 72 145Z" fill="#e8e9ea" stroke="#bbb"/><path d="M86 152 138 182" stroke="#333" stroke-width="3"/><path d="M110 175q40-15 80 20l-20 50h-20l-25-45Z" fill="#edcfbd"/><text x="10" y="59" font-size="25" font-weight="700" fill="#26305f">広告<tspan font-size="18" font-weight="400">の</tspan>透明性<tspan font-size="18" font-weight="400">や</tspan></text><text x="11" y="90" font-size="25" font-weight="700" fill="#26305f">クオリティ改善<tspan font-size="18" font-weight="400" dx="4">への</tspan></text><text x="10" y="110" font-size="12.500" fill="#444" textLength="205">さまざまな取り組みを進めています。</text><text x="12" y="233" font-family="Liberation Serif" font-size="18" font-weight="700" fill="#d1123f" textLength="78" lengthAdjust="spacingAndGlyphs">YAHOO!</text><text x="58" y="241" font-family="Liberation Serif" font-size="8" fill="#d1123f" textLength="30">JAPAN</text></svg>

<!-- footer -->
<div id="foot">
<div style="top:47px"><u>乗りものニュース</u><u>くるまのニュース</u><u>自動車カタログ</u><u>VAGUE</u><u>バイクのニュース</u><u>オトナンサー</u><u>マグミクス</u><u>ゴルフのニュース</u><u>GOLFGEAR CATALOG</u></div>
<div style="top:92px"><u>LASISA（らしさ）</u><u>旅費ガイド</u></div>
<div style="top:137px"><u>新着記事一覧</u><u>Merkmalとは？</u><u>お問い合わせ</u><u>情報提供のお願い・広告掲載</u><u>編集者・ライター募集</u><u>運営会社</u><u>プライバシーポリシー</u></div>
<div style="top:203px;font-size:14px">© 2020 mediavague Inc.</div>
</div>

<!-- push popup -->
<div class="a" style="left:392px;top:-10px;width:500px;height:188px;background:#fff;border-radius:10px;box-shadow:0 4px 28px rgba(0,0,0,.16)"></div>
<div class="bar" style="left:419px;top:27px;width:10px;height:74px"></div>
<div class="bar" style="left:435px;top:40px;width:10px;height:61px"></div>
<div class="bar" style="left:451px;top:53px;width:10px;height:48px"></div>
<div class="bar" style="left:467px;top:40px;width:10px;height:61px"></div>
<div class="bar" style="left:483px;top:27px;width:10px;height:74px"></div>
<div class="a" style="left:513px;top:24px;font-size:15px;line-height:22px;color:#222">プッシュ通知で最新ニュースをお届けします！</div>
<div class="a" style="left:682px;top:117px;font-size:15px;line-height:22px;color:#2a80c0">ブロック</div>
<div class="a" style="left:784px;top:104px;width:84px;height:50px;background:#0076cc;border-radius:4px;color:#fff;font-size:15px;line-height:48px;text-align:center">許可</div>
</body></html>
